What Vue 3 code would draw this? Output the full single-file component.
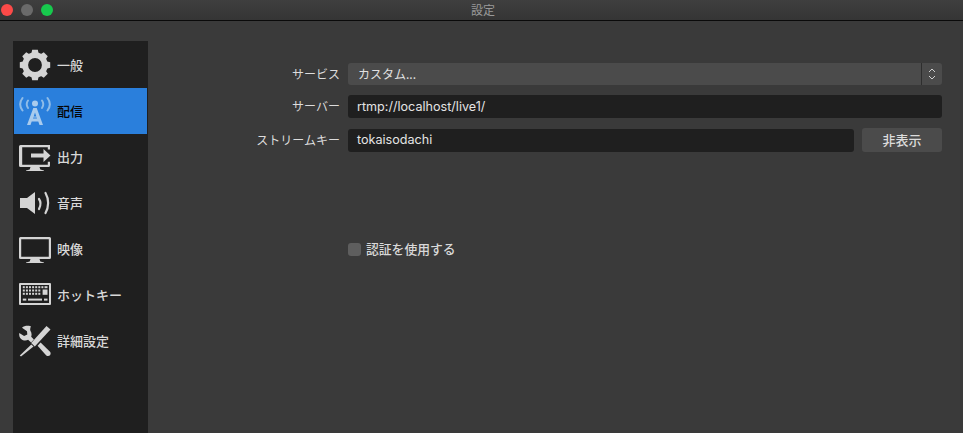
<template>
  <div class="window">
    <header class="titlebar">
      <div class="lights">
        <span class="light red"></span>
        <span class="light gray"></span>
        <span class="light green"></span>
      </div>
      <span class="title">設定</span>
    </header>
    <div class="content">
      <nav class="sidebar">
        <div v-for="item in items" :key="item.id" :class="['nav-item', { active: item.id === 'stream' }]">
          <svg class="nav-icon" viewBox="0 0 32 32" v-html="item.icon"></svg>
          <span class="nav-label">{{ item.label }}</span>
        </div>
      </nav>
      <main class="form">
        <div class="row row-select">
          <label>サービス</label>
          <div class="select">
            <span class="select-text">カスタム...</span>
            <span class="stepper">
              <svg width="10" height="16" viewBox="0 0 10 16">
                <path d="M2 6 5 3 8 6M2 10 5 13 8 10" fill="none" stroke="#cfcfcf" stroke-width="1" />
              </svg>
            </span>
          </div>
        </div>
        <div class="row row-server">
          <label>サーバー</label>
          <div class="input">rtmp://localhost/live1/</div>
        </div>
        <div class="row row-key">
          <label>ストリームキー</label>
          <div class="input">tokaisodachi</div>
          <button class="hide-btn"><span>非表示</span></button>
        </div>
        <div class="row row-check">
          <label></label>
          <div class="check">
            <span class="box"></span>
            <span class="check-text">認証を使用する</span>
          </div>
        </div>
      </main>
    </div>
  </div>
</template>

<script setup>
const c = '#d4d4d4'

let teeth = ''
for (let a = 0; a < 360; a += 45) {
  teeth += `<path d="M13.200 0.800h5.600l1.400 6h-8.400z" transform="rotate(${a} 16 16)"/>`
}
const gear = `<g fill="${c}">${teeth}</g>
<circle cx="16" cy="16" r="9.800" fill="none" stroke="${c}" stroke-width="5.800"/>`

const antenna = `<g fill="none" stroke="#8fbce8" stroke-width="2" stroke-linecap="round">
  <path d="M3.500 3c-3 4-3 8.500 0 12.500M28.500 3c3 4 3 8.500 0 12.500"/>
  <path d="M9 5.500c-1.600 2.300-1.600 5.200 0 7.500M23 5.500c1.600 2.300 1.600 5.200 0 7.500"/>
</g>
<circle cx="16" cy="8.500" r="3" fill="#a9cbed"/>
<path fill="#a9cbed" fill-rule="evenodd" d="M14.300 13h3.400l6.300 17h-3.500l-1.200-3.500h-6.600L11.500 30H8zM16 17.500l-1.300 4h2.600zM14 23.500h4l-.3-1h-3.400z"/>`

const output = `<path fill="${c}" d="M1.500 4h29v.1h.5v4.400h-2.200V6.200H3.200v17.600h25.600v-3H31v3.700a1.500 1.500 0 0 1-1.500 1.500H20.500l.8 2.500 3.700 1V30H7v-.5l3.700-1 .8-2.500H1.500A1.500 1.500 0 0 1 0 24.500v-19A1.500 1.500 0 0 1 1.500 4z"/>
<path fill="${c}" d="M12 12.500h12.500V8l7 6.500-7 6.500v-4.500H12z"/>`

const speaker = `<path fill="${c}" d="M1 11h7l8-6v22l-8-6H1z"/>
<g fill="none" stroke="${c}" stroke-width="2.200" stroke-linecap="round">
  <path d="M20 12c1.800 2.600 1.800 6.600 0 10"/>
  <path d="M26.500 6c3.500 6 3.500 14 0 20"/>
</g>`

const monitor = `<path fill="${c}" fill-rule="evenodd" d="M1.500 4h29A1.500 1.500 0 0 1 32 5.500v19a1.500 1.500 0 0 1-1.500 1.500H20.500l.8 2.500 3.700 1v.5H7v-.5l3.700-1 .8-2.500H1.500A1.500 1.500 0 0 1 0 24.500v-19A1.500 1.500 0 0 1 1.500 4zM2.200 6.200v17.600h27.600V6.200z"/>`

let keys = ''
for (let row = 0; row < 3; row++) {
  for (let col = 0; col < 7; col++) {
    const wide = row === 0 ? 8 : 6
    if (col >= wide) continue
    keys += `<rect x="${3.800 + col * 3.100}" y="${7.200 + row * 3.300}" width="2" height="2"/>`
  }
}
const keyboard = `<path fill="${c}" fill-rule="evenodd" d="M1 4h30a1 1 0 0 1 1 1v20a1 1 0 0 1-1 1H1a1 1 0 0 1-1-1V5a1 1 0 0 1 1-1zM2 6v18h28V6z"/>
<g fill="${c}">${keys}<rect x="25.500" y="7.200" width="3" height="2"/><rect x="23.600" y="10.500" width="4.900" height="5.300"/><rect x="3.800" y="19.600" width="3.500" height="2"/><rect x="9" y="19.600" width="14" height="2"/><rect x="25" y="19.600" width="3.500" height="2"/></g>`

const tools = `<path fill="${c}" d="M27.500 1 31.500 4.500 15.800 21.500 12.200 18z"/>
<path fill="${c}" d="M12.300 19.500 14.500 21.500 2 31.500 0.800 30.500z"/>
<path fill="${c}" d="M11.500 1.200C8.200.400 5 1 3 2.700l5 3.600.3 3.300-3.200 1.400L.3 8C-.3 11 1 13.800 3.500 15c2.200 1 4.300.7 5.600-.2l3 2.700 2.800-3-2.700-2.700c.7-2 .4-4.300-.8-6.100-.5-1.400-.1-3 .6-4.500z"/>
<path fill="${c}" d="M18.600 20.800l3-3.300L30.800 26.600c1 1 1.200 2.500.2 3.700-1 1.100-2.700 1-3.700.1z"/>`

const items = [
  { id: 'general', label: '一般', icon: gear },
  { id: 'stream', label: '配信', icon: antenna },
  { id: 'output', label: '出力', icon: output },
  { id: 'audio', label: '音声', icon: speaker },
  { id: 'video', label: '映像', icon: monitor },
  { id: 'hotkeys', label: 'ホットキー', icon: keyboard },
  { id: 'advanced', label: '詳細設定', icon: tools },
]
</script>

<style>
html, body {
  margin: 0;
  background: #3a3a3a;
}
</style>

<style scoped>
.window {
  width: 963px;
  height: 433px;
  background: #3a3a3a;
  display: flex;
  flex-direction: column;
  overflow: hidden;
  font-family: "Noto Sans CJK JP", "Liberation Sans", sans-serif;
  color: #d8d8d8;
  font-size: 12px;
}

.titlebar {
  height: 20px;
  flex: none;
  display: flex;
  align-items: center;
  justify-content: center;
  background: linear-gradient(#3f3f3f, #353535);
  border-bottom: 1px solid #0a0a0a;
  position: relative;
}

.lights {
  position: absolute;
  left: 1px;
  top: 4px;
  display: flex;
  gap: 8px;
}

.light {
  width: 12px;
  height: 12px;
  border-radius: 50%;
}

.red { background: #fc4a48; }
.gray { background: #6a6a6a; }
.green { background: #17c94d; }

.title {
  font-size: 12px;
  color: #9a9a9a;
  padding-left: 3px;
  padding-bottom: 1px;
}

.content {
  flex: 1;
  display: flex;
  min-height: 0;
}

.sidebar {
  width: 135px;
  margin: 20px 0 0 13px;
  padding-top: 1px;
  background: #1f1f1f;
  flex: none;
  box-sizing: border-box;
}

.nav-item {
  height: 46px;
  margin: 0 1px;
  display: flex;
  align-items: center;
  padding-left: 5px;
  gap: 6px;
}

.nav-item.active {
  background: #2a7fdc;
}

.nav-item.active .nav-label {
  color: #060606;
}

.nav-icon {
  width: 32px;
  height: 32px;
  flex: none;
}

.nav-label {
  font-size: 13px;
  font-weight: 500;
  color: #d8d8d8;
  margin-bottom: 2px;
}

.form {
  flex: 1;
  padding: 42px 21px 0 0;
  display: flex;
  flex-direction: column;
}

.row {
  display: flex;
  align-items: center;
}

.row label {
  width: 192px;
  margin-right: 8px;
  text-align: right;
  flex: none;
  font-size: 12px;
  color: #dcdcdc;
  padding-bottom: 2px;
}

.row-select { height: 22px; margin-bottom: 10px; }
.row-server { height: 23px; margin-bottom: 10px; }
.row-key { height: 24px; margin-bottom: 91px; }
.row-check { height: 13px; }

.select {
  flex: 1;
  height: 22px;
  background: #4b4b4b;
  border-radius: 3px;
  display: flex;
  align-items: center;
  justify-content: space-between;
  font-size: 12px;
  color: #e0e0e0;
}

.select-text {
  padding-left: 10px;
  padding-bottom: 2px;
}

.stepper {
  width: 20px;
  height: 100%;
  border-left: 1px solid #2e2e2e;
  display: flex;
  align-items: center;
  justify-content: center;
}

.input {
  flex: 1;
  height: 23px;
  box-sizing: border-box;
  background: #1f1f1f;
  border-radius: 3px;
  padding-left: 9px;
  padding-bottom: 1px;
  display: flex;
  align-items: center;
  color: #e4e4e4;
  font-size: 12.6px;
  font-family: "Inter", "Liberation Sans", sans-serif;
}

.hide-btn {
  width: 80px;
  height: 24px;
  margin-left: 8px;
  flex: none;
  border: none;
  border-radius: 3px;
  background: #4b4b4b;
  color: #dcdcdc;
  font-size: 13px;
  font-weight: 500;
  font-family: inherit;
  padding: 0 0 2px;
}

.check {
  display: flex;
  align-items: center;
  gap: 5px;
  font-size: 12.8px;
  font-weight: 500;
  color: #d8d8d8;
}

.check-text {
  margin-bottom: 3px;
}

.box {
  width: 13px;
  height: 13px;
  border-radius: 3px;
  background: #5e5e5e;
}
</style>
